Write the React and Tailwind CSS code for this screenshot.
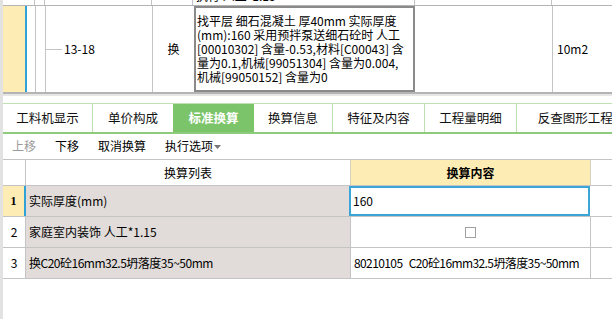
import React from 'react'

const font = { fontFamily: '"Noto Sans CJK SC", "Liberation Sans", sans-serif' }

const tabs = ['工料机显示', '单价构成', '标准换算', '换算信息', '特征及内容', '工程量明细', '反查图形工程量']
const tabWidths = ['w-[90px]', 'w-[80px]', 'w-[81px]', 'w-[79px]', 'w-[92px]', 'w-[92px]', 'w-[130px]']

function TopGrid() {
  return (
    <div className="relative">
      {/* 上一行，只露出底部 */}
      <div className="flex h-[5px] overflow-hidden">
        <div className="w-[23px] shrink-0" />
        <div className="w-[9px] shrink-0 border-r border-[#c4c4c4]" />
        <div className="w-[10px] shrink-0 border-r border-[#c4c4c4]" />
        <div className="w-[107px] shrink-0 border-r border-[#c4c4c4]" />
        <div className="w-[41px] shrink-0 border-r border-[#c4c4c4]" />
        <div className="w-[222px] shrink-0 border-r border-[#c4c4c4] pl-[3px]">
          <div className="-mt-[11px] text-[12px] leading-[14px] whitespace-nowrap">执行 人工*1.15</div>
        </div>
        <div className="w-[137px] shrink-0 border-r border-[#c4c4c4]" />
        <div className="flex-1" />
      </div>
      {/* 当前行 */}
      <div className="flex h-[89px] border-t border-b-2 border-[#b4b4b4]">
        <div className="w-[22px] shrink-0 bg-[#fdedb5]" />
        <div className="w-[2px] shrink-0 bg-[#2fa3d8]" />
        <div className="w-[9px] shrink-0 border-r border-[#c4c4c4]" />
        <div className="w-[10px] shrink-0 border-r border-[#c4c4c4]" />
        <div className="w-[107px] shrink-0 border-r border-[#c4c4c4] flex items-center">
          <div className="w-[16px] h-px bg-[#c4c4c4] mr-[2px]" />
          <span className="text-[12px]">13-18</span>
        </div>
        <div className="w-[41px] shrink-0 flex items-center justify-center text-[12px]">换</div>
        <div className="w-[221px] shrink-0 border-2 border-[#8a8a8a] bg-white pl-[1px] pt-[6px] text-[12px] leading-[14px] whitespace-nowrap overflow-hidden">
          <div>找平层 细石混凝土 厚40mm 实际厚度</div>
          <div>(mm):160 采用预拌泵送细石砼时 人工</div>
          <div>[00010302] 含量-0.53,材料[C00043] 含</div>
          <div>量为0.1,机械[99051304] 含量为0.004,</div>
          <div>机械[99050152] 含量为0</div>
        </div>
        <div className="w-[138px] shrink-0 border-r border-[#c4c4c4]" />
        <div className="flex-1 flex items-center pl-[4px] text-[12px]">10m2</div>
      </div>
    </div>
  )
}

function Tabs() {
  return (
    <div className="flex h-[31px] border-t border-[#bfe3b0] border-b-2 border-b-[#8fcb7d] overflow-hidden">
      {tabs.map((t, i) => (
        <div
          key={t}
          className={`${tabWidths[i]} shrink-0 flex items-center justify-center text-[12.5px] whitespace-nowrap ${
            i === 2 ? 'bg-[#7cc46a] text-white font-bold' : 'text-[#111] border-r border-[#bfe3b0]'
          } ${i === 1 ? 'border-r-0' : ''}`}
        >
          {t}
        </div>
      ))}
    </div>
  )
}

function Toolbar() {
  return (
    <div className="flex items-center h-[23px] text-[12px] pl-[9px] gap-[19px]">
      <span className="text-[#9a9a9a]">上移</span>
      <span>下移</span>
      <span>取消换算</span>
      <span className="flex items-center">
        执行选项
        <svg width="7" height="4" viewBox="0 0 7 4" className="ml-[1px] mt-[2px]">
          <path d="M0 0 L7 0 L3.5 4 Z" fill="#777" />
        </svg>
      </span>
    </div>
  )
}

const rows = [
  { n: '1', name: '实际厚度(mm)' },
  { n: '2', name: '家庭室内装饰 人工*1.15' },
  { n: '3', name: '换C20砼16mm32.5坍落度35~50mm' },
]

function Table() {
  return (
    <div className="flex-1 flex flex-col">
      <div className="flex h-[27px] border-t border-b border-[#c4c4c4]">
        <div className="w-[23px] shrink-0 border-r border-[#c4c4c4]" />
        <div className="w-[324px] shrink-0 flex items-center justify-center text-[12px]">换算列表</div>
        <div className="w-[241px] shrink-0 bg-[#fdedb5] border-x border-[#d6d0c0] flex items-center justify-center text-[12px] font-bold">换算内容</div>
      </div>
      {rows.map((r, i) => (
        <div key={r.n} className="flex h-[31px] border-b border-[#c4c4c4]">
          {i === 0 ? (
            <div className="w-[23px] shrink-0 bg-[#fdedb5] border-r-2 border-[#2fa3d8] flex items-center justify-center text-[12px] font-bold" style={{ fontFamily: '"Liberation Serif", serif' }}>
              {r.n}
            </div>
          ) : (
            <div className="w-[23px] shrink-0 border-r border-[#c4c4c4] flex items-center justify-center text-[12px]">{r.n}</div>
          )}
          <div className={`${i === 0 ? 'w-[323px]' : 'w-[324px]'} shrink-0 bg-[#e1dcd9] flex items-center pl-[3px] text-[12px] whitespace-nowrap ${i === 2 ? 'tracking-[-0.5px]' : ''}`}>
            {r.name}
          </div>
          {i === 0 && (
            <div className="w-[241px] shrink-0 border-2 border-[#3ba5d6] bg-white flex items-center pl-[2px] text-[12px]">160</div>
          )}
          {i === 1 && (
            <div className="w-[241px] shrink-0 border-x border-[#c4c4c4] bg-white flex items-center justify-center">
              <div className="w-[11px] h-[11px] border border-[#a0a0a0] bg-white" />
            </div>
          )}
          {i === 2 && (
            <div className="w-[241px] shrink-0 border-x border-[#c4c4c4] bg-white flex items-center pl-[3px] text-[12px] whitespace-pre tracking-[-0.6px] overflow-hidden">
              {'80210105   C20砼16mm32.5坍落度35~50mm'}
            </div>
          )}
        </div>
      ))}
    </div>
  )
}

export default function App() {
  return (
    <div className="w-[612px] h-[319px] overflow-hidden bg-white text-black flex" style={font}>
      <div className="w-[3px] shrink-0 bg-[#e2e2e2]" />
      <div className="flex-1 flex flex-col min-w-0">
        <TopGrid />
        <div className="h-[2px] bg-[#e6e6e6]" />
        <div className="h-[7px]" />
        <Tabs />
        <Toolbar />
        <div className="h-[2px]" />
        <Table />
      </div>
    </div>
  )
}
